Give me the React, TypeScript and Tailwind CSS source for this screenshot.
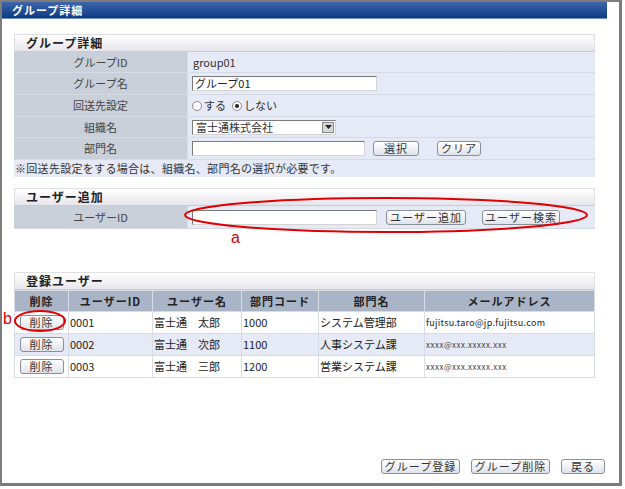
import React from "react";

const F = "font-['Noto_Sans_CJK_JP','Liberation_Sans',sans-serif]";

function Btn({ children, w, cls = "" }: { children: React.ReactNode; w: string; cls?: string }) {
  return (
    <span
      className={`${w} ${cls} h-[15px] inline-flex items-center justify-center rounded-[3px] border border-[#8a8f99] bg-gradient-to-b from-[#ffffff] to-[#dfe3ea] text-[11px] leading-none text-[#333] tracking-[1px]`}
    >
      {children}
    </span>
  );
}

function PanelHeader({ children }: { children: React.ReactNode }) {
  return (
    <div className="h-[18px] flex items-center pl-[11px] border border-[#e0e0e4] border-b-[#c9cad3] bg-gradient-to-b from-[#ffffff] to-[#e6e6ec] text-[12px] font-bold text-[#222] tracking-[1px]">
      {children}
    </div>
  );
}

function Row({ label, h, children }: { label: string; h: string; children: React.ReactNode }) {
  return (
    <div className={`flex ${h} border-b border-[#d6dae4]`}>
      <div className="w-[174px] shrink-0 bg-[#c9d0d9] flex items-center justify-center text-[11px] text-[#444] border-r border-[#d9dde6]">
        {label}
      </div>
      <div className="flex-1 bg-[#e6e9f6] flex items-center pl-[4px] text-[11px] text-[#333]">
        {children}
      </div>
    </div>
  );
}

function Input({ w, value }: { w: string; value?: string }) {
  return (
    <span className={`${w} h-[15px] inline-flex items-center bg-white border border-[#7a7a7a] border-r-[#d4d4d4] border-b-[#d4d4d4] text-[11px] pl-[2px] text-[#222]`}>
      {value}
    </span>
  );
}

function Radio({ checked }: { checked?: boolean }) {
  return (
    <span className="w-[10px] h-[10px] rounded-full border border-[#8a8a8a] bg-white inline-flex items-center justify-center">
      {checked && <span className="w-[4px] h-[4px] rounded-full bg-[#222]" />}
    </span>
  );
}

const rows = [
  ["0001", "富士通　太郎", "1000", "システム管理部", "fujitsu.taro@jp.fujitsu.com"],
  ["0002", "富士通　次郎", "1100", "人事システム課", "xxxx@xxx.xxxxx.xxx"],
  ["0003", "富士通　三郎", "1200", "営業システム課", "xxxx@xxx.xxxxx.xxx"],
];

export default function App() {
  return (
    <div className={`w-[625px] h-[489px] bg-white ${F} relative overflow-hidden`}>
      <div className="w-[622px] h-[486px] border-l-[2px] border-t-[2px] border-r-[3px] border-b-[3px] border-[#7d7d7d] flex flex-col">
        <div className="h-[17px] mr-[12px] bg-gradient-to-b from-[#3d65ab] to-[#0b3b82] border-b border-[#6f8fc6] flex items-center pl-[10px] text-[11px] font-bold text-white tracking-[1px]">
          グループ詳細
        </div>
        <div className="flex-1 flex flex-col pl-[12px] pr-[24px] pt-[15px]">
          {/* Section 1 */}
          <div className="flex flex-col">
            <PanelHeader>グループ詳細</PanelHeader>
            <Row label="グループID" h="h-[21px]">
              <span className="pl-[1px]">group01</span>
            </Row>
            <Row label="グループ名" h="h-[22px]">
              <Input w="w-[185px]" value="グループ01" />
            </Row>
            <Row label="回送先設定" h="h-[22px]">
              <span className="inline-flex items-center gap-[2px]">
                <Radio />する
              </span>
              <span className="inline-flex items-center gap-[2px] ml-[6px]">
                <Radio checked />しない
              </span>
            </Row>
            <Row label="組織名" h="h-[21px]">
              <span className="w-[144px] h-[15px] inline-flex items-center justify-between bg-white border border-[#7a7a7a] border-r-[#d4d4d4] border-b-[#d4d4d4] text-[11px] pl-[3px]">
                富士通株式会社
                <span className="w-[12px] h-[11px] mr-[1px] bg-[#d8d8d8] border border-[#888] flex items-center justify-center">
                  <svg width="7" height="4" viewBox="0 0 7 4"><path d="M0 0h7L3.5 4z" fill="#222" /></svg>
                </span>
              </span>
            </Row>
            <Row label="部門名" h="h-[22px]">
              <Input w="w-[173px]" />
              <Btn w="w-[46px]" cls="ml-[8px]">選択</Btn>
              <Btn w="w-[44px]" cls="ml-[18px]">クリア</Btn>
            </Row>
            <div className="h-[17px] bg-[#e6e9f6] flex items-center pl-[1px] text-[11px] text-[#333] tracking-[0.3px]">
              ※回送先設定をする場合は、組織名、部門名の選択が必要です。
            </div>
          </div>

          {/* Section 2 */}
          <div className="flex flex-col mt-[11px]">
            <PanelHeader>ユーザー追加</PanelHeader>
            <Row label="ユーザーID" h="h-[23px]">
              <Input w="w-[185px]" />
              <Btn w="w-[80px]" cls="ml-[9px]">ユーザー追加</Btn>
              <Btn w="w-[78px]" cls="ml-[16px]">ユーザー検索</Btn>
            </Row>
          </div>

          {/* Section 3 */}
          <div className="flex flex-col mt-[43px]">
            <PanelHeader>登録ユーザー</PanelHeader>
            <table className="border-collapse table-fixed w-full text-[11px] text-[#222]">
              <colgroup>
                <col className="w-[54px]" />
                <col className="w-[84px]" />
                <col className="w-[89px]" />
                <col className="w-[77px]" />
                <col className="w-[106px]" />
                <col />
              </colgroup>
              <thead>
                <tr className="h-[21px] bg-[#a9b5c7]">
                  {["削除", "ユーザーID", "ユーザー名", "部門コード", "部門名", "メールアドレス"].map((h) => (
                    <th key={h} className="border border-[#d8dce4] font-bold text-center text-[#222] p-0 tracking-[1px]">
                      {h}
                    </th>
                  ))}
                </tr>
              </thead>
              <tbody>
                {rows.map((r, i) => (
                  <tr key={r[0]} className={`h-[22px] ${i === 1 ? "bg-[#e6e9f6]" : "bg-white"}`}>
                    <td className="border border-[#d8dce4] p-0 text-center">
                      <Btn w="w-[44px]">削除</Btn>
                    </td>
                    <td className="border border-[#d8dce4] p-0 pl-[1px]">{r[0]}</td>
                    <td className="border border-[#d8dce4] p-0 pl-[1px]">{r[1]}</td>
                    <td className="border border-[#d8dce4] p-0 pl-[1px]">{r[2]}</td>
                    <td className="border border-[#d8dce4] p-0 pl-[1px]">{r[3]}</td>
                    <td className={`border border-[#d8dce4] p-0 pl-[1px] ${i === 0 ? "text-[9px] tracking-[0.3px]" : "text-[8px] tracking-[0.5px] text-[#444]"}`}>{r[4]}</td>
                  </tr>
                ))}
              </tbody>
            </table>
          </div>

          <div className="flex-1" />
          <div className="flex justify-end gap-[11px] mb-[9px] -mr-[10px]">
            <Btn w="w-[79px]">グループ登録</Btn>
            <Btn w="w-[79px]">グループ削除</Btn>
            <Btn w="w-[44px]">戻る</Btn>
          </div>
        </div>
      </div>

      {/* annotations */}
      <svg className="absolute left-0 top-0 pointer-events-none" width="625" height="489">
        <ellipse cx="386" cy="215" rx="201" ry="17" fill="none" stroke="#e00000" strokeWidth="2" />
        <ellipse cx="40" cy="321" rx="25" ry="10" fill="none" stroke="#e00000" strokeWidth="2" />
      </svg>
      <span className="absolute left-[231px] top-[230px] text-[16px] leading-none text-[#e00000] font-['Liberation_Sans',sans-serif]">a</span>
      <span className="absolute left-[3px] top-[311px] text-[16px] leading-none text-[#e00000] font-['Liberation_Sans',sans-serif]">b</span>
    </div>
  );
}
